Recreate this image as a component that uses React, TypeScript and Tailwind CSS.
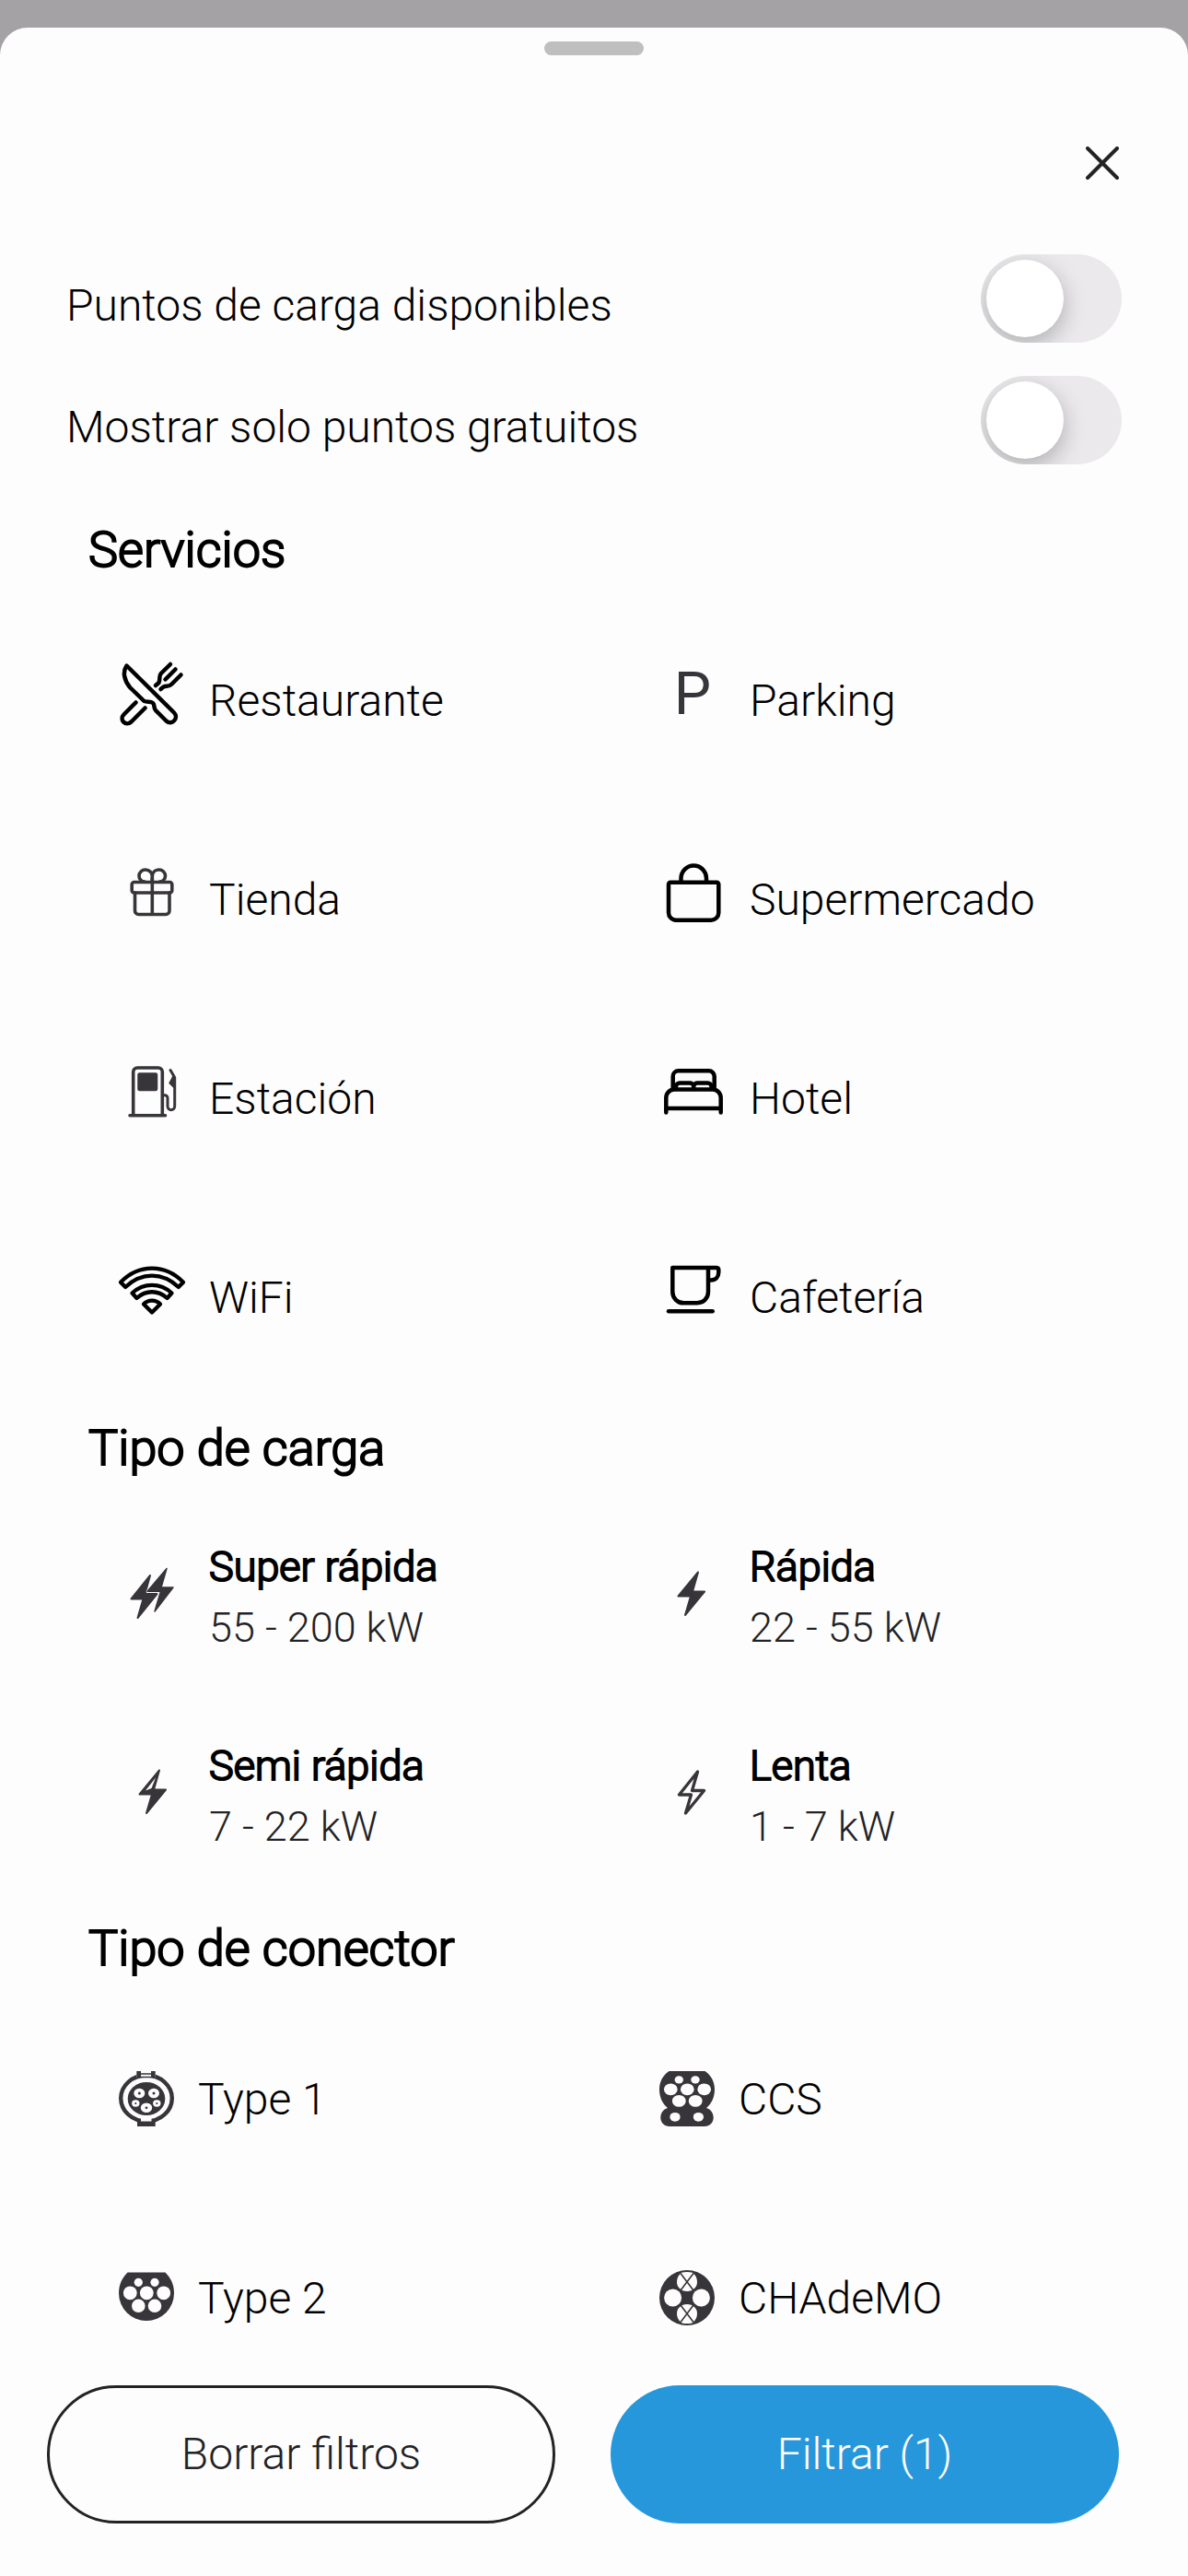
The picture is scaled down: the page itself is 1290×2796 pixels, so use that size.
import { useState, type ReactNode } from "react";

const INK = "#38353a";

function LineIcon({ children, color = "#000" }: { children: ReactNode; color?: string }) {
  return (
    <svg
      viewBox="0 0 72 72"
      className="size-[72px] overflow-visible"
      fill="none"
      stroke={color}
      strokeWidth="4.5"
      strokeLinecap="round"
      strokeLinejoin="round"
      aria-hidden="true"
    >
      {children}
    </svg>
  );
}

function PlugIcon({ children }: { children: ReactNode }) {
  return (
    <svg viewBox="0 0 60 60" className="size-[60px] overflow-visible" fill={INK} aria-hidden="true">
      {children}
    </svg>
  );
}

const restaurant = (
  <LineIcon>
    <path d="M8.5 6.5 60 57.5C65.500 63 58 72 51.500 66.500L40 55C37.500 52.500 39.500 49.500 37 47C34.500 44.500 31 46.500 27.500 45L12 30C5.500 22 4 13 8.500 6.500Z" />
    <path d="M18.500 46.500 5.500 59.500C0 65 7.500 73 13.500 67.500L28.500 52.500" />
    <path d="M56 5 45.800 15C42.800 18.500 45.500 21 43.500 25L40 28M61.500 10.500 50.500 21.500M67.500 16.500 57.500 26.500C54 30 52 28 48.500 29.500L45.500 32" />
  </LineIcon>
);

const parking = (
  <span
    className="flex size-[72px] items-center justify-center pt-1 text-[64px] leading-[72px] font-normal text-[#38353a]"
    aria-hidden="true"
  >
    P
  </span>
);

const gift = (
  <LineIcon color={INK}>
    <g strokeWidth="3.6">
      <rect x="14.200" y="25.500" width="43.600" height="11.500" rx="2.500" />
      <path d="M17.500 37V56.500A4 4 0 0 0 21.500 60.500H51A4 4 0 0 0 55 56.500V37M36.300 21V60" />
      <path d="M36.300 25V19.500C36.300 15 33 12 29 12C25 12 22 15 22 18.800C22 22.500 25 25 28 25M36.300 25V19.500C36.300 15 39.500 12 43.500 12C47.500 12 50.500 15 50.500 18.800C50.500 22.500 47.500 25 44.500 25" />
    </g>
  </LineIcon>
);

const bag = (
  <LineIcon>
    <path d="M12 25.700H62.300A2 2 0 0 1 64.300 27.700V58.500A8 8 0 0 1 56.300 66.700H18A8 8 0 0 1 10 58.500V27.700A2 2 0 0 1 12 25.700Z" />
    <path d="M23.500 25V21.300A13.700 13.700 0 0 1 51 21.300V25" />
  </LineIcon>
);

const fuelPump = (
  <LineIcon color={INK}>
    <g strokeWidth="3.600">
      <path d="M15.700 62V15.500A4.500 4.500 0 0 1 20.200 11H42.800A4.500 4.500 0 0 1 47.300 15.500V62M12 62.700H50.500" />
      <rect x="21.500" y="17.500" width="19.500" height="17.500" rx="1" fill={INK} strokeWidth="2.500" />
      <path
        d="M48.500 40.700H50A3 3 0 0 1 53 43.700V52.500C53 58 60.700 58 60.700 52.500V21.500L56 13.500"
        strokeWidth="3"
      />
      <path d="M59.500 18.500 57.500 23 55 27.500 60 32.500V21Z" fill={INK} strokeWidth="1.500" />
    </g>
  </LineIcon>
);

const bed = (
  <LineIcon>
    <path d="M14.700 33V20.300A6 6 0 0 1 20.700 14.300H53.700A6 6 0 0 1 59.700 20.300V33" />
    <path d="M18 34V31A4 4 0 0 1 22 27.500H33A4 4 0 0 1 37.200 31A4 4 0 0 1 41.400 27.500H52.500A4 4 0 0 1 56.500 31V34M37.200 31V34" />
    <path d="M7.300 59.500V43.500A9 9 0 0 1 16.300 34.500H57.700A9 9 0 0 1 66.700 43.500V59.500M7.300 55H66.700" />
  </LineIcon>
);

const wifi = (
  <LineIcon>
    <g strokeWidth="4.300">
      <path d="M2 27.700C22 7.700 50 7.700 70 27.700L64.800 33C47.500 16.500 24.500 16.500 7.200 33Z" />
      <path d="M14.500 39.500C27 28 45 28 57.500 39.500L52.500 45C42.500 36 29.500 36 19.500 45Z" />
      <path d="M27 51.500C32 46.200 40 46.200 45 51.500L36 60.500Z" />
    </g>
  </LineIcon>
);

const cup = (
  <LineIcon>
    <path d="M14.300 12H62A2.500 2.500 0 0 1 64.300 14.500V17C64.300 22 61 25.500 56 25.500H53M14.300 12V38.300A12 12 0 0 0 26.300 50.300H41A12 12 0 0 0 53 38.300V13" />
    <path d="M10 59.300H57.700" />
  </LineIcon>
);

const BOLT = "M42 15.500 20.500 41.500H34L28 62 49 36.500H36Z";

const doubleBolt = (
  <LineIcon color={INK}>
    <g strokeWidth="2" fill={INK}>
      <path d="M34 19 13.500 44.500H26.500L20.500 65 41.500 39H28.500Z" />
      <path d="M52 11 31.500 36.300H45.500L39 58 59 32H46Z" stroke="#fdfdfd" strokeWidth="3.500" />
      <path d="M52 11.500 31 36.300H45.500L39 58 59 32H46Z" strokeWidth="1.500" />
    </g>
  </LineIcon>
);

const solidBolt = (
  <LineIcon color={INK}>
    <path d={BOLT} fill={INK} strokeWidth="2" />
  </LineIcon>
);

const halfBolt = (
  <LineIcon color={INK}>
    <g transform="translate(2 -1)">
      <path d={BOLT} fill={INK} strokeWidth="2" />
      <path d="M38 23.500 27 37.500 33.500 35Z" fill="#fdfdfd" stroke="none" />
    </g>
  </LineIcon>
);

const outlineBolt = (
  <LineIcon color={INK}>
    <path d="M41.500 16 21.500 41H34.500L28.500 61 48.500 36.500H35.500Z" strokeWidth="3.300" />
  </LineIcon>
);

const type1 = (
  <PlugIcon>
    <ellipse cx="30" cy="29.500" rx="27.800" ry="25" fill="none" stroke={INK} strokeWidth="4.400" />
    <ellipse cx="30" cy="30" rx="20.300" ry="18" />
    <rect x="19.300" y="0" width="20.500" height="7" fill="#fdfdfd" />
    <rect x="19.300" y="0" width="4.700" height="7" />
    <rect x="35" y="0" width="4.700" height="7" />
    <path d="M22 3H37M22 6.500H37" stroke={INK} strokeWidth="1.500" />
    <rect x="20" y="53" width="19.700" height="7" />
    <rect x="24" y="51" width="11.500" height="3.500" fill="#fdfdfd" />
    <g fill="#fdfdfd">
      <ellipse cx="22.300" cy="24" rx="6" ry="5.300" />
      <ellipse cx="38" cy="24" rx="6" ry="5.300" />
      <ellipse cx="18.300" cy="35" rx="4.200" ry="3.700" />
      <ellipse cx="41.300" cy="35" rx="4.200" ry="3.700" />
      <ellipse cx="30" cy="39.800" rx="6.200" ry="5.300" />
    </g>
    <circle cx="22.300" cy="24" r="1.500" />
    <circle cx="38" cy="24" r="1.500" />
    <circle cx="18.300" cy="35" r="1.100" />
    <circle cx="41.300" cy="35" r="1.100" />
    <circle cx="30" cy="39.800" r="1.400" />
  </PlugIcon>
);

const type2 = (
  <PlugIcon>
    <path d="M9.500 2.500H50.500C56 8 60 15 60 25A30 30 0 0 1 0 25C0 15 4 8 9.500 2.500Z" />
    <g fill="#fdfdfd">
      <circle cx="21.300" cy="13.300" r="4.600" />
      <circle cx="39" cy="13.300" r="4.600" />
      <circle cx="12.300" cy="24.800" r="7.400" />
      <circle cx="30.300" cy="24.800" r="7.400" />
      <circle cx="48.700" cy="24.800" r="7.400" />
      <circle cx="21.300" cy="38.800" r="7.300" />
      <circle cx="39" cy="38.800" r="7.300" />
    </g>
  </PlugIcon>
);

const ccs = (
  <PlugIcon>
    <path d="M10.500 0H49.500C56 4.500 60 11 60 20C60 29 56 36 51 40C56 41.500 58.700 45.500 58.700 50.500C58.700 56 54.500 60 49 60H11C5.500 60 1.300 56 1.300 50.500C1.300 45.500 4 41.500 9 40C4 36 0 29 0 20C0 11 4 4.500 10.500 0Z" />
    <g fill="#fdfdfd">
      <ellipse cx="21.300" cy="9.400" rx="4.700" ry="4.100" />
      <ellipse cx="39" cy="9.400" rx="4.700" ry="4.100" />
      <ellipse cx="12.300" cy="19.800" rx="7.400" ry="6.400" />
      <ellipse cx="30.300" cy="19.800" rx="7.400" ry="6.400" />
      <ellipse cx="48.700" cy="19.800" rx="7.400" ry="6.400" />
      <ellipse cx="21.300" cy="32.400" rx="7.400" ry="6.400" />
      <ellipse cx="39.200" cy="32.400" rx="7.400" ry="6.400" />
      <ellipse cx="17" cy="49.800" rx="5.600" ry="4.900" />
      <ellipse cx="42.400" cy="49.800" rx="5.600" ry="4.900" />
    </g>
  </PlugIcon>
);

const chademo = (
  <PlugIcon>
    <circle cx="30" cy="30" r="30" />
    <g fill="#fdfdfd">
      <circle cx="14.600" cy="30" r="9.500" />
      <circle cx="45.400" cy="30" r="9.500" />
      <path d="M24 2.800C28 1.600 32 1.600 36 2.800C39.500 5.500 41 9 41 13C41 18.500 36.500 23 30 23C23.500 23 19 18.500 19 13C19 9 20.500 5.500 24 2.800Z" />
      <path d="M24 57.200C28 58.400 32 58.400 36 57.200C39.500 54.500 41 51 41 47C41 41.500 36.500 37 30 37C23.500 37 19 41.500 19 47C19 51 20.500 54.500 24 57.200Z" />
    </g>
    <path d="M23 3.500 37 22M37 3.500 23 22M23 56.500 37 38M37 56.500 23 38" stroke={INK} strokeWidth="1.600" />
  </PlugIcon>
);

type Option = { label: string; detail?: string; icon: ReactNode };

const services: Option[] = [
  { label: "Restaurante", icon: restaurant },
  { label: "Parking", icon: parking },
  { label: "Tienda", icon: gift },
  { label: "Supermercado", icon: bag },
  { label: "Estación", icon: fuelPump },
  { label: "Hotel", icon: bed },
  { label: "WiFi", icon: wifi },
  { label: "Cafetería", icon: cup },
];

const chargeTypes: Option[] = [
  { label: "Super rápida", detail: "55 - 200 kW", icon: doubleBolt },
  { label: "Rápida", detail: "22 - 55 kW", icon: solidBolt },
  { label: "Semi rápida", detail: "7 - 22 kW", icon: halfBolt },
  { label: "Lenta", detail: "1 - 7 kW", icon: outlineBolt },
];

const connectors: Option[] = [
  { label: "Type 1", icon: type1 },
  { label: "CCS", icon: ccs },
  { label: "Type 2", icon: type2 },
  { label: "CHAdeMO", icon: chademo },
];

function Switch({ id, label }: { id: string; label: string }) {
  const [on, setOn] = useState(false);
  return (
    <div className="flex h-[132px] items-center justify-between px-[72px]">
      <label htmlFor={id} className="pt-4 text-[48px] leading-[64px]">
        {label}
      </label>
      <input
        id={id}
        type="checkbox"
        role="switch"
        checked={on}
        onChange={(e) => setOn(e.target.checked)}
        className="h-24 w-[153px] shrink-0 appearance-none overflow-hidden rounded-full bg-[#ebe9ec] p-1.5 before:block before:size-[84px] before:rounded-full before:bg-white before:shadow-[0_8px_24px_rgba(0,0,0,0.26)] checked:bg-[#2797db] checked:before:ml-auto"
      />
    </div>
  );
}

function Section({ title, options, raised = false }: { title: string; options: Option[]; raised?: boolean }) {
  return (
    <section className="px-[58px]">
      <h2 className="h-[111px] pt-6 pl-[38px] text-[54px] leading-[64px] font-light [-webkit-text-stroke:2px_black]">
        {title}
      </h2>
      <div className="grid grid-cols-2">
        {options.map((o) => (
          <button key={o.label} type="button" className="flex h-[216px] items-center gap-[26px] pl-[71px] text-left">
            <span className={raised ? "pb-4" : ""}>{o.icon}</span>
            {o.detail ? (
              <span className="flex flex-col pb-0.5 text-[45px] leading-[66px]">
                <span className="[-webkit-text-stroke:2px_black]">{o.label}</span>
                <span className="text-[#232225]">{o.detail}</span>
              </span>
            ) : (
              <span className="pt-0.5 text-[48px] leading-[64px]">{o.label}</span>
            )}
          </button>
        ))}
      </div>
    </section>
  );
}

export default function App() {
  return (
    <div className="flex h-screen flex-col bg-[#a4a2a5] pt-[30px] font-['Roboto','Liberation_Sans',sans-serif] font-light text-black">
      <main className="flex min-h-0 flex-1 flex-col rounded-t-[30px] bg-[#fdfdfd]">
        <div className="flex justify-center pt-[15px]">
          <span className="h-[15px] w-[108px] rounded-full bg-[#c0bfc0]" />
        </div>
        <header className="flex justify-end pt-[81px] pr-[57px] pb-[45px]">
          <button type="button" aria-label="Cerrar" className="flex size-[72px] items-center justify-center">
            <svg viewBox="0 0 36 36" className="size-9" stroke="#232225" strokeWidth="4" strokeLinecap="round" aria-hidden="true">
              <path d="M2 2 34 34M34 2 2 34" />
            </svg>
          </button>
        </header>
        <div className="min-h-0 flex-1 overflow-y-auto [scrollbar-width:none]">
          <div className="pb-[19px]">
            <Switch id="available" label="Puntos de carga disponibles" />
            <Switch id="free" label="Mostrar solo puntos gratuitos" />
          </div>
          <Section title="Servicios" options={services} raised />
          <Section title="Tipo de carga" options={chargeTypes} raised />
          <Section title="Tipo de conector" options={connectors} />
        </div>
        <footer className="grid grid-cols-2 gap-[60px] pr-[75px] pb-[57px] pl-[51px] text-[48px] leading-[64px]">
          <button type="button" className="h-[150px] rounded-full border-[3px] border-[#232225] text-[#232225]">
            Borrar filtros
          </button>
          <button type="button" className="h-[150px] rounded-full bg-[#2797db] text-white">
            Filtrar (1)
          </button>
        </footer>
      </main>
    </div>
  );
}
